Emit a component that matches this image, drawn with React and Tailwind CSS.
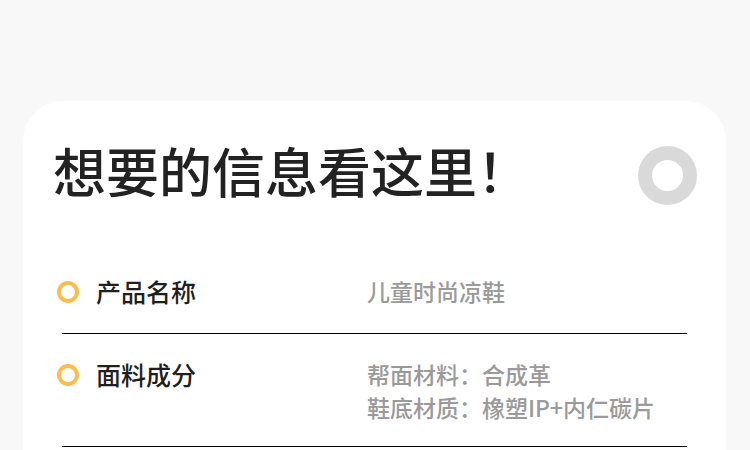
export default function App() {
  const font = { fontFamily: '"Noto Sans CJK SC", "Noto Sans", sans-serif' };
  const Ring = () => (
    <div className="w-[22px] h-[22px] rounded-full border-[4px] border-[#fbbd4f] shrink-0" />
  );
  return (
    <div className="w-[750px] h-[450px] bg-[#f8f8f8] overflow-hidden pt-[101px] pl-[23px]" style={font}>
      <div className="w-[703px] h-[500px] bg-white rounded-[40px] pt-[39px]">
        <div className="flex items-start justify-between pl-[30px] pr-[29px] h-[60px]">
          <div className="text-[53px] leading-[60px] font-medium text-[#222]">想要的信息看这里！</div>
          <div className="w-[59px] h-[59px] rounded-full border-[14.5px] border-[#d9d9d9] mt-[6px]" />
        </div>
        <div className="mx-[39px] mt-[48px]">
          <div className="flex border-b border-black pt-[27px] pb-[25px]">
            <div className="flex items-center gap-[17px] -ml-[5px] w-[310px] h-[33px]">
              <Ring />
              <span className="text-[25px] leading-[33px] font-medium text-[#1f1f1f]">产品名称</span>
            </div>
            <div className="text-[23px] leading-[33px] font-medium text-[#9a9a9a]">儿童时尚凉鞋</div>
          </div>
          <div className="flex border-b border-black pt-[24px] pb-[22px]">
            <div className="flex items-center gap-[17px] -ml-[5px] w-[310px] h-[33px]">
              <Ring />
              <span className="text-[25px] leading-[33px] font-medium text-[#1f1f1f]">面料成分</span>
            </div>
            <div className="text-[23px] leading-[33px] font-medium text-[#9a9a9a]">
              <div>帮面材料：合成革</div>
              <div>鞋底材质：橡塑IP+内仁碳片</div>
            </div>
          </div>
        </div>
      </div>
    </div>
  );
}
